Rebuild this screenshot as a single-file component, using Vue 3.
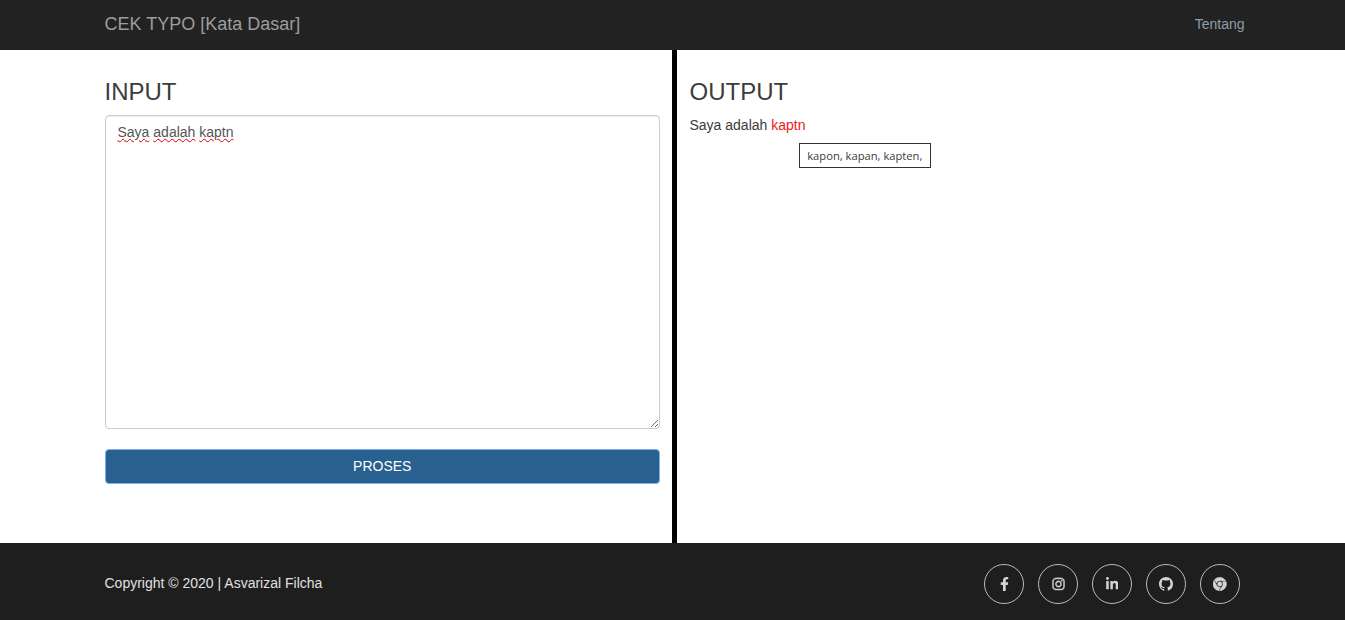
<script setup>
const icons = [
  { name: 'facebook', box: '0 0 320 512', w: 9, s: 0, d: 'M279.14 288l14.22-92.66h-88.91v-60.13c0-25.35 12.42-50.06 52.24-50.06h40.42V6.26S260.43 0 225.36 0c-73.22 0-121.08 44.38-121.08 124.72v70.62H22.89V288h81.39v224h100.17V288z' },
  { name: 'instagram', box: '0 0 448 512', w: 13, s: 14, d: 'M224.1 141c-63.6 0-114.9 51.3-114.9 114.9s51.3 114.9 114.9 114.9S339 319.5 339 255.9 287.7 141 224.1 141zm0 189.6c-41.1 0-74.7-33.5-74.7-74.7s33.5-74.7 74.7-74.7 74.7 33.5 74.7 74.7-33.6 74.7-74.7 74.7zm146.4-194.3c0 14.9-12 26.8-26.8 26.8-14.9 0-26.8-12-26.8-26.8s12-26.8 26.8-26.8 26.8 12 26.8 26.8zm76.1 27.2c-1.7-35.9-9.9-67.7-36.2-93.9-26.2-26.2-58-34.4-93.9-36.2-37-2.1-147.9-2.1-184.9 0-35.8 1.7-67.6 9.9-93.9 36.1s-34.4 58-36.2 93.9c-2.1 37-2.1 147.9 0 184.9 1.7 35.9 9.9 67.7 36.2 93.9s58 34.4 93.9 36.2c37 2.1 147.9 2.1 184.9 0 35.9-1.7 67.7-9.9 93.9-36.2 26.2-26.2 34.4-58 36.2-93.9 2.1-37 2.1-147.8 0-184.8zM398.8 388c-7.8 19.6-22.9 34.7-42.6 42.6-29.5 11.7-99.5 9-132.1 9s-102.7 2.6-132.1-9c-19.6-7.8-34.7-22.9-42.6-42.6-11.7-29.5-9-99.5-9-132.1s-2.6-102.7 9-132.1c7.8-19.6 22.9-34.7 42.6-42.6 29.5-11.7 99.5-9 132.1-9s102.7-2.6 132.1 9c19.6 7.8 34.7 22.9 42.6 42.6 11.7 29.5 9 99.5 9 132.1s2.7 102.7-9 132.1z' },
  { name: 'linkedin', box: '0 0 448 512', w: 12.25, s: 0, d: 'M100.28 448H7.4V148.9h92.88zM53.79 108.1C24.09 108.1 0 83.5 0 53.8a53.79 53.79 0 0 1 107.58 0c0 29.7-24.1 54.3-53.79 54.3zM447.9 448h-92.68V302.4c0-34.7-.7-79.2-48.29-79.2-48.29 0-55.69 37.7-55.69 76.7V448h-92.78V148.9h89.08v40.8h1.3c12.4-23.5 42.69-48.3 87.88-48.3 94 0 111.28 61.9 111.28 142.3V448z' },
  { name: 'github', box: '0 0 16 16', w: 14, s: 0, d: 'M8 0C3.58 0 0 3.58 0 8c0 3.54 2.29 6.53 5.47 7.59.4.07.55-.17.55-.38 0-.19-.01-.82-.01-1.49-2.01.37-2.53-.49-2.69-.94-.09-.23-.48-.94-.82-1.13-.28-.15-.68-.52-.01-.53.63-.01 1.08.58 1.23.82.72 1.21 1.87.87 2.33.66.07-.52.28-.87.51-1.07-1.78-.2-3.64-.89-3.64-3.95 0-.87.31-1.59.82-2.15-.08-.2-.36-1.02.08-2.12 0 0 .67-.21 2.2.82.64-.18 1.32-.27 2-.27.68 0 1.36.09 2 .27 1.53-1.04 2.2-.82 2.2-.82.44 1.1.16 1.92.08 2.12.51.56.82 1.27.82 2.15 0 3.07-1.87 3.75-3.65 3.95.29.25.54.73.54 1.48 0 1.07-.01 1.93-.01 2.2 0 .21.15.46.55.38A8.013 8.013 0 0 0 16 8c0-4.42-3.58-8-8-8z' },
  { name: 'chrome', box: '0 0 496 512', w: 13.5, s: 16, d: 'M131.5 217.5L55.1 100.1c47.6-59.2 119-91.8 192-92.1 42.3-.3 85.5 10.5 124.8 33.2 43.4 25.2 76.4 61.4 97.4 103L264 133.4c-58.1-3.4-113.4 29.3-132.5 84.1zm32.9 38.5c0 46.2 37.4 83.6 83.6 83.6s83.6-37.4 83.6-83.6-37.4-83.6-83.6-83.6-83.6 37.3-83.6 83.6zm314.9-89.2L339.6 174c37.9 44.3 38.5 108.2 6.6 157.2L234.1 503.6c46.5 2.5 94.4-7.7 137.8-32.9 107.4-62 150.9-192 107.4-303.9zM133.7 303.6L40.4 120.1C14.9 159.1 0 205.9 0 256c0 124 90.8 226.7 209.5 244.9l63.7-124.8c-57.6 10.8-113.2-20.8-139.5-72.5z' },
]
</script>

<template>
  <div class="page">
    <header class="navbar">
      <span class="brand">CEK TYPO [Kata Dasar]</span>
      <a class="nav-link">Tentang</a>
    </header>

    <main class="split">
      <section class="col col-left">
        <h3 class="title">INPUT</h3>
        <div class="textarea"><span class="typo">Saya</span> <span class="typo">adalah</span> <span class="typo">kaptn</span></div>
        <button class="btn" type="button">PROSES</button>
      </section>
      <section class="col col-right">
        <h3 class="title">OUTPUT</h3>
        <p class="result">Saya adalah <span class="wrong">kaptn<span class="tip">kapon, kapan, kapten,</span></span></p>
      </section>
    </main>

    <footer class="footer">
      <span class="copy">Copyright © 2020 | Asvarizal Filcha</span>
      <div class="socials">
        <a v-for="icon in icons" :key="icon.name" class="social" :aria-label="icon.name">
          <svg :viewBox="icon.box" :width="icon.w" height="14" fill="currentColor" stroke="currentColor" :stroke-width="icon.s"><path :d="icon.d" /></svg>
        </a>
      </div>
    </footer>
  </div>
</template>

<style>
html, body { margin: 0; background: #fff; }
</style>

<style scoped>
.page {
  height: 620px;
  display: flex;
  flex-direction: column;
  font-family: "Liberation Sans", Arial, sans-serif;
  font-size: 14px;
  line-height: 20px;
  color: #3c3c3c;
}
.navbar {
  height: 50px;
  flex: none;
  box-sizing: border-box;
  background: #222;
  display: flex;
  align-items: center;
  justify-content: space-between;
  padding: 0 100.5px 2px 104.5px;
}
.brand { font-size: 18px; color: #9d9d9d; }
.nav-link { color: #8f9cab; }
.split { flex: 1; display: flex; min-height: 0; }
.col { box-sizing: border-box; padding-top: 30px; }
.col-left { width: 677px; flex: none; border-right: 5px solid #000; padding-left: 104.5px; padding-right: 12px; }
.col-right { flex: 1; padding-left: 12.5px; position: relative; }
.title { margin: 0 0 11px; font-size: 24px; font-weight: 500; line-height: 24px; color: #3c3c3c; }
.textarea {
  box-sizing: border-box;
  width: 555.5px;
  height: 314px;
  padding: 6px 12px;
  border: 1px solid #ccc;
  border-radius: 4px;
  box-shadow: inset 0 1px 1px rgba(0, 0, 0, .075);
  color: #555;
  overflow: auto;
  resize: both;
}
.typo { text-decoration: underline wavy #e00000 1px; text-underline-offset: 1px; }
.btn {
  display: block;
  width: 555.5px;
  height: 35px;
  margin-top: 20px;
  padding: 0 0 2px;
  border: 1px solid #80b0f4;
  border-radius: 4px;
  background: #286090;
  color: #fff;
  font: 14px/20px "Liberation Sans", Arial, sans-serif;
}
.result { margin: 0; }
.wrong { color: #f01818; position: relative; }
.tip {
  position: absolute;
  left: 27.5px;
  top: 26px;
  box-sizing: border-box;
  height: 25px;
  padding: 0 7.5px;
  border: 1px solid #333;
  background: #fff;
  color: #3c3c3c;
  font-family: "Open Sans", sans-serif;
  font-size: 11.2px;
  line-height: 23px;
  white-space: nowrap;
}
.footer {
  height: 77px;
  flex: none;
  box-sizing: border-box;
  background: #1e1e1e;
  display: flex;
  align-items: center;
  justify-content: space-between;
  padding: 2px 105px 0 104.5px;
}
.copy { color: #e0e0e0; }
.socials { display: flex; gap: 14px; margin-top: 2px; }
.social {
  box-sizing: border-box;
  width: 40px;
  height: 40px;
  border: 1px solid #bbb;
  border-radius: 50%;
  display: flex;
  align-items: center;
  justify-content: center;
  color: #d4d4d4;
}
</style>
